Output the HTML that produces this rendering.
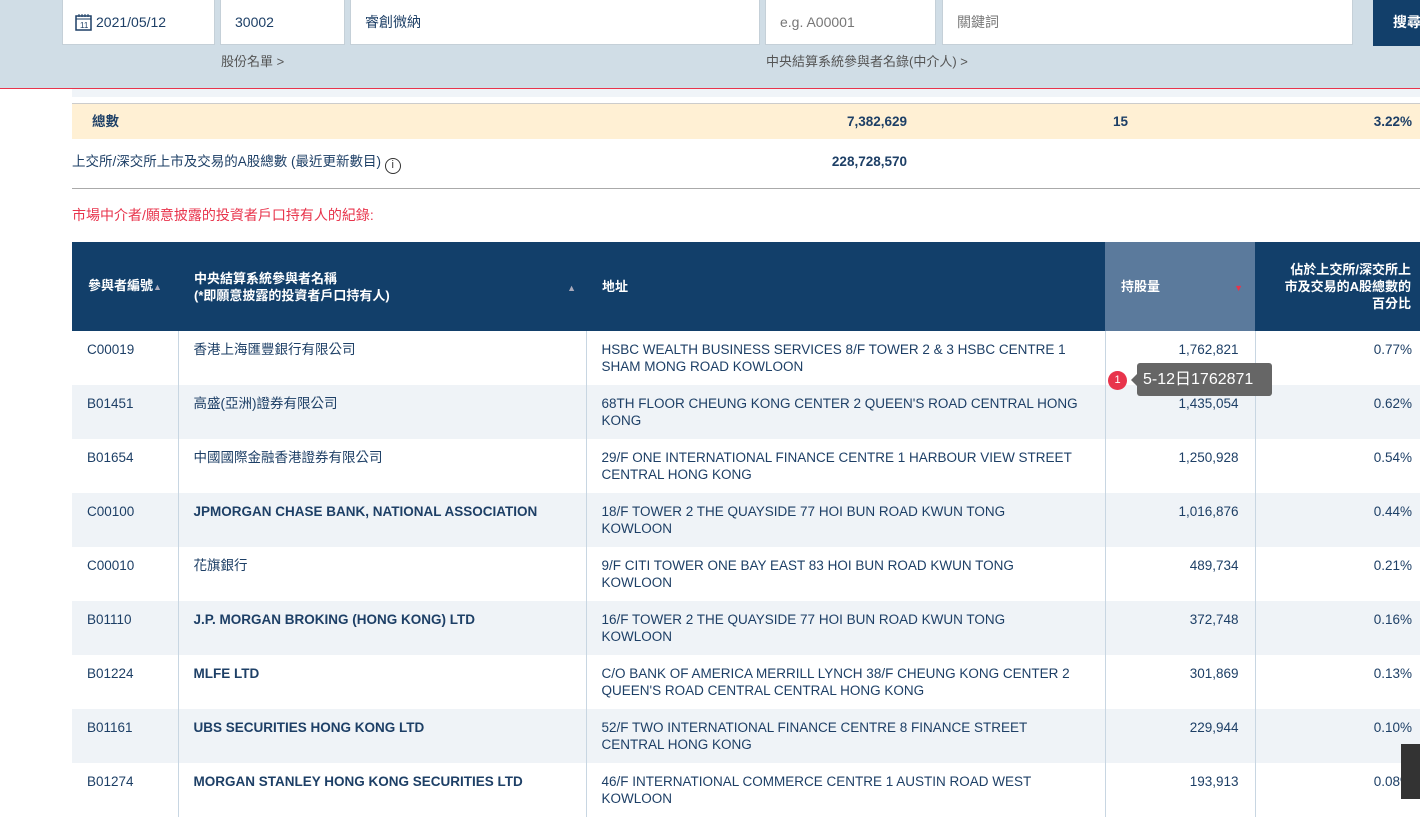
<!DOCTYPE html>
<html><head><meta charset="utf-8"><style>
*{margin:0;padding:0;box-sizing:border-box}
body{width:1420px;height:799px;overflow:hidden;background:#fff;font-family:"Liberation Sans","Noto Sans CJK TC",sans-serif;color:#1d3f66;font-size:14px;position:relative}
.hdr{position:absolute;left:0;top:0;width:1420px;height:88px;background:#d0dde6}
.redline{position:absolute;left:0;top:88px;width:1420px;height:1px;background:#e8344c}
.in{position:absolute;top:0;height:45px;background:#fff;border:1px solid #c5d0d8;border-top:none;font-size:14px;line-height:44px;padding-left:14px;color:#1d3f66}
.ph{color:#777}
.lnk{position:absolute;top:51px;font-size:13px;color:#555}
.btn{position:absolute;left:1373px;top:0;width:47px;height:46px;background:#123f6a;color:#fff;font-weight:bold;line-height:44px;padding-left:20px;white-space:nowrap;overflow:hidden}
.strip{position:absolute;left:72px;top:89px;width:1348px;height:8px;background:#f0f4f8}
.tot{position:absolute;left:72px;top:103px;width:1348px;height:36px;background:#fff0d4;border-top:1px solid #ccc;font-weight:bold;font-size:13.5px;line-height:36px}
.r2{position:absolute;left:72px;top:148px;width:1348px;height:41px;border-bottom:1px solid #aaa;line-height:27px;font-size:13.5px}
.red{position:absolute;left:72px;top:205px;color:#e8344c;font-size:14px}
table{position:absolute;left:72px;top:242px;border-collapse:collapse;width:1348px;table-layout:fixed}
th{background:#123f6a;color:#fff;height:89px;font-size:13px;text-align:left;padding:0 16px;font-weight:bold;line-height:17px;position:relative;white-space:nowrap}
th.s{background:#5b7a9c}
td{height:54px;vertical-align:top;padding:10px 16px 0 15px;font-size:13.5px;line-height:17px;border-left:1px solid #c8d6e2;white-space:nowrap;overflow:hidden}
td:first-child{border-left:none}
tr:nth-child(odd) td{background:#eff3f7}
.n{text-align:right}
.b{font-weight:bold}
.tip{position:absolute;left:1137px;top:363px;width:135px;height:33px;background:#666;color:#fff;font-size:16px;line-height:33px;padding-left:6px;border-radius:3px}
.tip:before{content:"";position:absolute;left:-6px;top:11px;border:6px solid transparent;border-right-color:#666;border-left:none}
.dot{position:absolute;left:1108px;top:371px;width:19px;height:19px;border-radius:50%;background:#e8344c;color:#fff;font-size:11px;text-align:center;line-height:19px}
</style></head><body>
<div class="hdr">
<div class="in" style="left:62px;width:153px;padding-left:12px"><svg width="17" height="18" viewBox="0 0 17 18" style="vertical-align:-4px;margin-right:4px"><rect x="1" y="3" width="15" height="14" fill="none" stroke="#1d3f66" stroke-width="1.5"/><path d="M1 6h15M4 1v3M7 1v3M10 1v3M13 1v3" stroke="#1d3f66"/><text x="5" y="15" font-size="8" fill="#1d3f66" font-family="Liberation Sans">11</text></svg>2021/05/12</div>
<div class="in" style="left:220px;width:125px">30002</div>
<div class="in" style="left:350px;width:410px">睿創微納</div>
<div class="in ph" style="left:765px;width:171px">e.g. A00001</div>
<div class="in ph" style="left:942px;width:411px">關鍵詞</div>
<div class="btn">搜尋</div>
<div class="lnk" style="left:221px">股份名單 &gt;</div>
<div class="lnk" style="left:766px">中央結算系統參與者名錄(中介人) &gt;</div>
</div>
<div class="redline"></div>
<div class="strip"></div>
<div class="tot"><span style="position:absolute;left:20px">總數</span><span style="position:absolute;right:513px">7,382,629</span><span style="position:absolute;left:1041px">15</span><span style="position:absolute;right:8px">3.22%</span></div>
<div class="r2"><span>上交所/深交所上市及交易的A股總數 (最近更新數目) <span style="display:inline-block;width:16px;height:16px;border:1.5px solid #333;border-radius:50%;font-size:11px;line-height:13px;text-align:center;color:#333;vertical-align:-2px">i</span></span><span class="b" style="position:absolute;right:513px">228,728,570</span></div>
<div class="red">市場中介者/願意披露的投資者戶口持有人的紀錄:</div>
<table>
<colgroup><col style="width:106px"><col style="width:408px"><col style="width:519px"><col style="width:150px"><col style="width:165px"></colgroup>
<tr><th>參與者編號<span style="font-size:9px;color:#aab">▲</span></th><th>中央結算系統參與者名稱<br>(*即願意披露的投資者戶口持有人)<span style="position:absolute;right:10px;top:38px;font-size:9px;color:#aab">▲</span></th><th>地址</th><th class="s">持股量<span style="position:absolute;right:12px;top:38px;font-size:9px;color:#e8344c">▼</span></th><th style="text-align:right;padding:0 9px 0 10px">佔於上交所/深交所上<br>市及交易的A股總數的<br>百分比</th></tr>
<tr><td>C00019</td><td>香港上海匯豐銀行有限公司</td><td>HSBC WEALTH BUSINESS SERVICES 8/F TOWER 2 &amp; 3 HSBC CENTRE 1<br>SHAM MONG ROAD KOWLOON</td><td class="n">1,762,821</td><td class="n" style="padding-right:8px">0.77%</td></tr>
<tr><td>B01451</td><td>高盛(亞洲)證券有限公司</td><td>68TH FLOOR CHEUNG KONG CENTER 2 QUEEN'S ROAD CENTRAL HONG<br>KONG</td><td class="n">1,435,054</td><td class="n" style="padding-right:8px">0.62%</td></tr>
<tr><td>B01654</td><td>中國國際金融香港證券有限公司</td><td>29/F ONE INTERNATIONAL FINANCE CENTRE 1 HARBOUR VIEW STREET<br>CENTRAL HONG KONG</td><td class="n">1,250,928</td><td class="n" style="padding-right:8px">0.54%</td></tr>
<tr><td>C00100</td><td class="b">JPMORGAN CHASE BANK, NATIONAL ASSOCIATION</td><td>18/F TOWER 2 THE QUAYSIDE 77 HOI BUN ROAD KWUN TONG<br>KOWLOON</td><td class="n">1,016,876</td><td class="n" style="padding-right:8px">0.44%</td></tr>
<tr><td>C00010</td><td>花旗銀行</td><td>9/F CITI TOWER ONE BAY EAST 83 HOI BUN ROAD KWUN TONG<br>KOWLOON</td><td class="n">489,734</td><td class="n" style="padding-right:8px">0.21%</td></tr>
<tr><td>B01110</td><td class="b">J.P. MORGAN BROKING (HONG KONG) LTD</td><td>16/F TOWER 2 THE QUAYSIDE 77 HOI BUN ROAD KWUN TONG<br>KOWLOON</td><td class="n">372,748</td><td class="n" style="padding-right:8px">0.16%</td></tr>
<tr><td>B01224</td><td class="b">MLFE LTD</td><td>C/O BANK OF AMERICA MERRILL LYNCH 38/F CHEUNG KONG CENTER 2<br>QUEEN'S ROAD CENTRAL CENTRAL HONG KONG</td><td class="n">301,869</td><td class="n" style="padding-right:8px">0.13%</td></tr>
<tr><td>B01161</td><td class="b">UBS SECURITIES HONG KONG LTD</td><td>52/F TWO INTERNATIONAL FINANCE CENTRE 8 FINANCE STREET<br>CENTRAL HONG KONG</td><td class="n">229,944</td><td class="n" style="padding-right:8px">0.10%</td></tr>
<tr><td>B01274</td><td class="b">MORGAN STANLEY HONG KONG SECURITIES LTD</td><td>46/F INTERNATIONAL COMMERCE CENTRE 1 AUSTIN ROAD WEST<br>KOWLOON</td><td class="n">193,913</td><td class="n" style="padding-right:8px">0.08%</td></tr>
</table>
<div class="dot">1</div>
<div class="tip">5-12日1762871</div>
<div style="position:absolute;left:1401px;top:744px;width:19px;height:55px;background:#333"></div>
</body></html>
